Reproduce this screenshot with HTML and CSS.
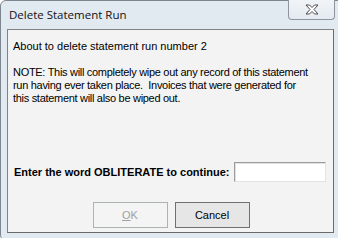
FILE: index.html
```html
<!DOCTYPE html>
<html>
<head>
<meta charset="utf-8">
<link rel="stylesheet" href="styles.css">
</head>
<body>
<div class="window">
  <div class="titlebar">
    <span class="title">Delete Statement Run</span>
    <div class="close">
      <svg width="14" height="11" viewBox="0 0 14 11"><polygon points="1,1 4.5,1 7,3.5 9.5,1 13,1 9,5.5 13,10 9.5,10 7,7.5 4.5,10 1,10 5,5.5" fill="#ffffff" stroke="#4a4a4a" stroke-width="1" stroke-linejoin="round"/></svg>
    </div>
  </div>
  <div class="panel">
    <p class="line">About to delete statement run number 2</p>
    <p class="note">NOTE: This will completely wipe out any record of this statement<br>run having ever taken place.&nbsp; Invoices that were generated for<br>this statement will also be wiped out.</p>
    <div class="confirm">
      <label class="label">Enter the word OBLITERATE to continue:</label>
      <div class="input"></div>
    </div>
    <div class="buttons">
      <div class="btn disabled"><span class="u">O</span>K</div>
      <div class="btn">Cancel</div>
    </div>
  </div>
</div>
</body>
</html>
```

FILE: styles.css
```css
html, body {
  margin: 0;
  padding: 0;
  overflow: hidden;
  width: 338px;
  height: 238px;
  background: #ffffff;
}

.window {
  width: 343px;
  height: 241px;
  box-sizing: border-box;
  background: #e2eaf1;
  border: 1px solid #7d868f;
  border-radius: 6px;
  display: flex;
  flex-direction: column;
}

.titlebar {
  height: 28px;
  display: flex;
  align-items: flex-start;
}

.title {
  font-family: "Open Sans", "Noto Sans", sans-serif;
  font-size: 11.5px;
  color: #111;
  margin-left: 8px;
  margin-top: 6px;
  line-height: 16px;
}

.close {
  margin-left: auto;
  margin-right: 7px;
  margin-top: -1px;
  width: 47px;
  height: 20px;
  box-sizing: border-box;
  border: 1px solid #8d969e;
  border-top: none;
  border-radius: 0 0 4px 4px;
  background: linear-gradient(#f1f4f7, #e4eaef);
  display: flex;
  align-items: center;
  justify-content: center;
}

.close svg {
  display: block;
}

.panel {
  margin-left: 6px;
  width: 327px;
  height: 204px;
  box-sizing: border-box;
  border: 1px solid #6a6a6a;
  border-top-color: #828282;
  border-left-color: #828282;
  background: #f3f3f3;
  padding: 10px 5px 0 5px;
  font-family: "Liberation Sans", Arial, sans-serif;
  font-size: 11px;
  color: #000;
  display: flex;
  flex-direction: column;
}

.line {
  margin: 0;
  line-height: 13px;
}

.note {
  margin: 13px 0 0 0;
  line-height: 13px;
  white-space: nowrap;
  letter-spacing: -0.3px;
}

.confirm {
  margin-top: 57px;
  display: flex;
  align-items: center;
  height: 20px;
}

.label {
  font-weight: bold;
  margin-left: 1px;
}

.input {
  margin-left: 4px;
  width: 92px;
  height: 20px;
  box-sizing: border-box;
  background: #ffffff;
  border: 1px solid #e3e3e3;
  border-top-color: #9c9c9c;
  border-left-color: #9c9c9c;
  box-shadow: inset 1px 1px 0 #e0e0e0;
}

.buttons {
  margin-top: 20px;
  display: flex;
  justify-content: center;
  gap: 7px;
  padding-left: 1px;
}

.btn {
  width: 75px;
  height: 26px;
  box-sizing: border-box;
  border: 1px solid #707070;
  background: #e6e6e6;
  display: flex;
  align-items: center;
  justify-content: center;
  font-size: 11px;
  color: #000;
}

.btn.disabled {
  border-color: #adb2b5;
  background: #f4f4f4;
  color: #a0a0a0;
}

.u {
  text-decoration: underline;
}
```
